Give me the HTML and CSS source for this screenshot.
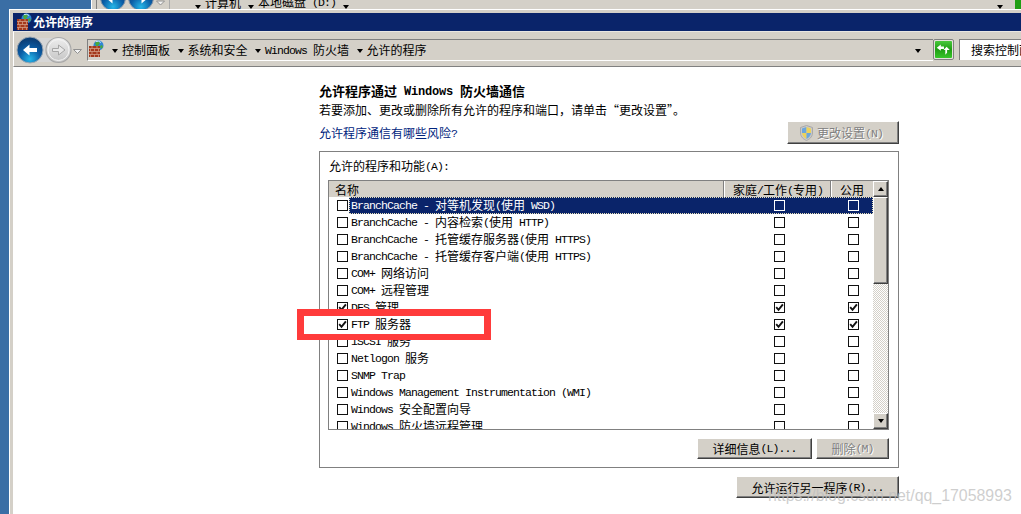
FILE: index.html
```html
<!DOCTYPE html>
<html lang="zh-CN">
<head>
<meta charset="utf-8">
<title>允许的程序</title>
<link rel="stylesheet" href="styles.css">
</head>
<body>
<svg class="defs" width="0" height="0" aria-hidden="true">
  <defs>
    <radialGradient id="gBlue" cx="50%" cy="85%" r="75%"><stop offset="0" stop-color="#25b6e8"/><stop offset=".55" stop-color="#0a5da6"/><stop offset="1" stop-color="#0b3f78"/></radialGradient>
    <linearGradient id="gGrey" x1="0" y1="0" x2="0" y2="1"><stop offset="0" stop-color="#eeeeee"/><stop offset="1" stop-color="#c4c4c4"/></linearGradient>
    <linearGradient id="gGreen" x1="0" y1="0" x2="0" y2="1"><stop offset="0" stop-color="#48c83c"/><stop offset=".5" stop-color="#1f9e14"/><stop offset="1" stop-color="#37c62a"/></linearGradient>
    <symbol id="firewall" viewBox="0 0 17 17">
      <circle cx="10.5" cy="5.5" r="5" fill="#2f86d6"/>
      <path d="M7 3 l3-2 2 2-2 3-2 0z M12 6l2-1 1 2-2 2z" fill="#4aa83c"/>
      <path d="M8 1.5 a5 5 0 0 1 5 1" stroke="#bfe4ff" fill="none"/>
      <rect x="1" y="6" width="11" height="11" fill="#a4391c"/>
      <path d="M1 8.5h11M1 11.5h11M1 14.5h11M4 6v2.5M9 6v2.5M2.500 8.5v3M6.500 8.500v3M10.500 8.500v3M4 11.500v3M9 11.500v3M2.500 14.500v2.500M6.500 14.500v2.500M10.500 14.500v2.500" stroke="#d8a890" stroke-width=".7" fill="none"/>
    </symbol>
    <symbol id="tick" viewBox="0 0 9 9">
      <path d="M1.200 4.200 L3.500 6.800 L7.900 1.300" fill="none" stroke="#111" stroke-width="1.900"/>
    </symbol>
  </defs>
</svg>

<div class="back-window">
  <svg class="back-nav" width="72" height="26" viewBox="0 0 72 26" aria-hidden="true">
    <circle cx="13" cy="13" r="12.500" fill="url(#gBlue)" stroke="#8a97a8"/>
    <path d="M6 13l6.500-5.500v3.500h7.500v4h-7.500v3.500z" fill="#fff"/>
    <circle cx="41" cy="13" r="12.500" fill="url(#gBlue)" stroke="#8a97a8"/>
    <path d="M48 13l-6.500-5.500v3.500h-7.500v4h7.500v3.500z" fill="#fff"/>
    <path d="M56.500 16h8l-4 4z" fill="#f2f2f2" stroke="#909090"/>
  </svg>
  <span class="back-sep"></span>
  <span class="caret back-caret"></span><span class="back-crumb">计算机</span>
  <span class="caret back-caret"></span><span class="back-crumb">本地磁盘<span class="m"> (D:)</span></span>
  <span class="caret back-caret"></span>
  <span class="back-spring"></span>
  <span class="caret back-caret"></span>
  <span class="back-refresh"></span>
</div>

<div class="window">
  <div class="titlebar">
    <svg class="title-icon" width="17" height="17" aria-hidden="true"><use href="#firewall"/></svg>
    <span>允许的程序</span>
  </div>

  <div class="navbar">
    <svg class="nav-buttons" width="73" height="34" viewBox="0 0 73 34" aria-hidden="true">
      <path d="M16 6 H44 V30 H16 Z" fill="#d6d6d6"/>
      <circle cx="44.500" cy="18" r="12.500" fill="url(#gGrey)" stroke="#a8a8a8" stroke-width="1.200"/>
      <circle cx="44.500" cy="18" r="10.500" fill="none" stroke="#f4f4f4"/>
      <path d="M38.500 16.500h6v-3.500l6.500 5-6.500 5v-3.500h-6z" fill="#e8e8e8" stroke="#a6a6a6"/>
      <circle cx="16" cy="18" r="13" fill="url(#gBlue)" stroke="#9aa6b2"/>
      <path d="M9 18l6.500-5.500v3.500h7.500v4h-7.500v3.500z" fill="#fff"/>
      <path d="M59.500 17.500h8l-4 4z" fill="#f2f2f2" stroke="#909090"/>
    </svg>
    <div class="address">
      <svg class="addr-icon" width="17" height="17" aria-hidden="true"><use href="#firewall"/></svg>
      <span class="caret crumb-caret"></span><span class="crumb">控制面板</span>
      <span class="caret crumb-caret"></span><span class="crumb">系统和安全</span>
      <span class="caret crumb-caret"></span><span class="crumb"><span class="m">Windows </span>防火墙</span>
      <span class="caret crumb-caret"></span><span class="crumb">允许的程序</span>
      <span class="caret addr-drop"></span>
    </div>
    <div class="refresh">
      <svg width="17" height="17" viewBox="0 0 19 19" aria-hidden="true">
        <rect width="19" height="19" rx="1" fill="url(#gGreen)"/>
        <path d="M2 7.500l4.500-3.500v2.200h3.500v2.800h-3.500v2z" fill="#fff"/>
        <path d="M16.500 10l-3.500-3.500-3.500 3.500h2v5.500l2-2.500v-3z" fill="#fff"/>
      </svg>
    </div>
    <div class="search">搜索控制面板</div>
  </div>

  <main class="content">
    <h1 class="heading">允许程序通过<span class="m"> Windows </span>防火墙通信</h1>
    <p class="desc">若要添加、更改或删除所有允许的程序和端口，请单击“更改设置”。</p>
    <div class="link-row">
      <a class="link" href="#">允许程序通信有哪些风险<span class="m">?</span></a>
      <button class="btn btn-settings" disabled>
        <svg class="shield" width="13" height="16" viewBox="0 0 13 16" aria-hidden="true">
          <path d="M6.500 .5 L12.500 2.500 V8 C12.500 12 9 14.500 6.500 15.500 C4 14.500 .5 12 .5 8 V2.500 Z" fill="#c9c9c9" stroke="#a9a9a9"/>
          <path d="M6.500 2 L2 3.500 V8 H6.500 Z" fill="#6aa6dc"/>
          <path d="M6.500 2 L11 3.500 V8 H6.500 Z" fill="#ecd25a"/>
          <path d="M2 8 H6.500 V14 C4.500 13 2.300 11 2 8 Z" fill="#ecd25a"/>
          <path d="M11 8 H6.500 V14 C8.500 13 10.700 11 11 8 Z" fill="#6aa6dc"/>
        </svg>
        <span>更改设置<span class="m">(N)</span></span>
      </button>
    </div>

    <section class="group">
      <div class="group-label">允许的程序和功能<span class="m">(A):</span></div>
      <div class="list">
        <div class="list-main">
          <div class="list-head">
            <div class="col-name">名称</div>
            <div class="col-a">家庭<span class="m">/</span>工作<span class="m">(</span>专用<span class="m">)</span></div>
            <div class="col-b">公用</div>
          </div>

          <div class="row selected">
            <span class="cb"></span>
            <div class="row-body">
              <div class="name"><span class="m">BranchCache - </span>对等机发现<span class="m">(</span>使用<span class="m"> WSD)</span></div>
              <div class="cell-a"><span class="cb"></span></div>
              <div class="cell-b"><span class="cb"></span></div>
            </div>
          </div>
          <div class="row">
            <span class="cb"></span>
            <div class="row-body">
              <div class="name"><span class="m">BranchCache - </span>内容检索<span class="m">(</span>使用<span class="m"> HTTP)</span></div>
              <div class="cell-a"><span class="cb"></span></div>
              <div class="cell-b"><span class="cb"></span></div>
            </div>
          </div>
          <div class="row">
            <span class="cb"></span>
            <div class="row-body">
              <div class="name"><span class="m">BranchCache - </span>托管缓存服务器<span class="m">(</span>使用<span class="m"> HTTPS)</span></div>
              <div class="cell-a"><span class="cb"></span></div>
              <div class="cell-b"><span class="cb"></span></div>
            </div>
          </div>
          <div class="row">
            <span class="cb"></span>
            <div class="row-body">
              <div class="name"><span class="m">BranchCache - </span>托管缓存客户端<span class="m">(</span>使用<span class="m"> HTTPS)</span></div>
              <div class="cell-a"><span class="cb"></span></div>
              <div class="cell-b"><span class="cb"></span></div>
            </div>
          </div>
          <div class="row">
            <span class="cb"></span>
            <div class="row-body">
              <div class="name"><span class="m">COM+ </span>网络访问</div>
              <div class="cell-a"><span class="cb"></span></div>
              <div class="cell-b"><span class="cb"></span></div>
            </div>
          </div>
          <div class="row">
            <span class="cb"></span>
            <div class="row-body">
              <div class="name"><span class="m">COM+ </span>远程管理</div>
              <div class="cell-a"><span class="cb"></span></div>
              <div class="cell-b"><span class="cb"></span></div>
            </div>
          </div>
          <div class="row">
            <span class="cb"><svg class="tick"><use href="#tick"/></svg></span>
            <div class="row-body">
              <div class="name"><span class="m">DFS </span>管理</div>
              <div class="cell-a"><span class="cb"><svg class="tick"><use href="#tick"/></svg></span></div>
              <div class="cell-b"><span class="cb"><svg class="tick"><use href="#tick"/></svg></span></div>
            </div>
          </div>
          <div class="row row-marked">
            <span class="cb"><svg class="tick"><use href="#tick"/></svg></span>
            <div class="row-body">
              <div class="name"><span class="m">FTP </span>服务器</div>
              <div class="cell-a"><span class="cb"><svg class="tick"><use href="#tick"/></svg></span></div>
              <div class="cell-b"><span class="cb"><svg class="tick"><use href="#tick"/></svg></span></div>
            </div>
          </div>
          <div class="row">
            <span class="cb"></span>
            <div class="row-body">
              <div class="name"><span class="m">iSCSI </span>服务</div>
              <div class="cell-a"><span class="cb"></span></div>
              <div class="cell-b"><span class="cb"></span></div>
            </div>
          </div>
          <div class="row">
            <span class="cb"></span>
            <div class="row-body">
              <div class="name"><span class="m">Netlogon </span>服务</div>
              <div class="cell-a"><span class="cb"></span></div>
              <div class="cell-b"><span class="cb"></span></div>
            </div>
          </div>
          <div class="row">
            <span class="cb"></span>
            <div class="row-body">
              <div class="name"><span class="m">SNMP Trap</span></div>
              <div class="cell-a"><span class="cb"></span></div>
              <div class="cell-b"><span class="cb"></span></div>
            </div>
          </div>
          <div class="row">
            <span class="cb"></span>
            <div class="row-body">
              <div class="name"><span class="m">Windows Management Instrumentation (WMI)</span></div>
              <div class="cell-a"><span class="cb"></span></div>
              <div class="cell-b"><span class="cb"></span></div>
            </div>
          </div>
          <div class="row">
            <span class="cb"></span>
            <div class="row-body">
              <div class="name"><span class="m">Windows </span>安全配置向导</div>
              <div class="cell-a"><span class="cb"></span></div>
              <div class="cell-b"><span class="cb"></span></div>
            </div>
          </div>
          <div class="row">
            <span class="cb"></span>
            <div class="row-body">
              <div class="name"><span class="m">Windows </span>防火墙远程管理</div>
              <div class="cell-a"><span class="cb"></span></div>
              <div class="cell-b"><span class="cb"></span></div>
            </div>
          </div>
        </div>

        <div class="scrollbar">
          <div class="sb-btn"><span class="caret caret-up"></span></div>
          <div class="sb-thumb"></div>
          <div class="sb-track"></div>
          <div class="sb-btn"><span class="caret"></span></div>
        </div>
      </div>

      <div class="group-actions">
        <button class="btn btn-details">详细信息<span class="m">(L)...</span></button>
        <button class="btn btn-delete" disabled>删除<span class="m">(M)</span></button>
      </div>
    </section>

    <div class="bottom-actions">
      <button class="btn btn-allow">允许运行另一程序<span class="m">(R)...</span></button>
    </div>
  </main>
</div>

<div class="red-mark"></div>
<div class="watermark">https://blog.csdn.net/qq_17058993</div>
</body>
</html>
```

FILE: styles.css
```css
* { box-sizing: border-box; }

html, body {
  margin: 0;
  height: 100%;
}

body {
  position: relative;
  width: 1021px;
  height: 514px;
  overflow: hidden;
  background: #3a6ea5;
  color: #000;
  font: 12px/17px "Noto Sans CJK SC", "Liberation Sans", sans-serif;
}

.defs { position: absolute; }

.m {
  font-family: "Liberation Mono", "Noto Sans CJK SC", monospace;
  font-size: 11.5px;
  letter-spacing: -0.9px;
  white-space: pre;
  vertical-align: 1px;
}

.caret {
  display: inline-block;
  flex: none;
  width: 0;
  height: 0;
  border-style: solid;
  border-width: 4px 3.5px 0;
  border-color: #000 transparent transparent;
}

.caret-up {
  border-width: 0 3.5px 4px;
  border-color: transparent transparent #000;
}

/* window behind, only its lower edge peeks out */
.back-window {
  position: absolute;
  left: 91px;
  top: -20px;
  right: 0;
  height: 35px;
  display: flex;
  align-items: center;
  padding-left: 4px;
  background: #d4d0c8;
  border-left: 1px solid #fff;
  box-shadow: inset 4px 0 0 #d4d0c8, inset 5px 0 0 #808080;
}

.back-nav { flex: none; margin-left: 4px; }
.back-sep {
  width: 1px;
  height: 24px;
  margin: 0 25px 0 -3px;
  background: #aaa;
}
.back-caret { margin-top: 18px; }
.back-crumb { margin: 9px 7px 0 4px; white-space: nowrap; }
.back-spring { flex: 1; }
.back-refresh {
  width: 6px;
  height: 20px;
  margin-left: 12px;
  margin-top: 14px;
  background: #1f9e14;
}

/* main window */
.window {
  position: absolute;
  left: 9px;
  top: 9px;
  right: 0;
  bottom: 0;
  display: flex;
  flex-direction: column;
  padding: 4px 0 0 4px;
  background: #d4d0c8;
  box-shadow: inset 1px 1px 0 #fff;
}

.titlebar {
  flex: none;
  display: flex;
  align-items: center;
  height: 18px;
  padding: 0 0 1px 3px;
  background: #0a246a;
  color: #fff;
  font-weight: 700;
}

.title-icon { margin-top: -1px; }

.navbar {
  flex: none;
  display: flex;
  align-items: flex-start;
  height: 36px;
  padding-top: 7px;
  border-top: 1px solid #e8e6e2;
  border-left: 1px solid #fff;
  border-bottom: 1px solid #808080;
  background: #d4d0c8;
}

.nav-buttons {
  flex: none;
  margin-top: -7px;
}

.address {
  flex: 1;
  display: flex;
  align-items: center;
  height: 22px;
  border-top: 1px solid #808080;
  border-left: 1px solid #808080;
  border-bottom: 1px solid #fff;
  white-space: nowrap;
}

.addr-icon { flex: none; margin: -3px 0 0 0; }
.crumb-caret { margin: 2px 4px 0 7px; }
.crumb-caret:first-of-type { margin-left: 7px; }
.crumb { white-space: nowrap; margin-right: 0.5px; padding-bottom: 1px; }
.addr-drop { margin: 2px 12px 0 auto; }

.refresh {
  flex: none;
  width: 21px;
  height: 21px;
  padding: 1px;
  background: #e4e2dc;
  border: 1px solid #808080;
  border-radius: 2px;
  line-height: 0;
}

.search {
  flex: none;
  width: 62px;
  height: 21px;
  margin-left: 5px;
  padding-left: 11px;
  overflow: hidden;
  white-space: nowrap;
  background: #fff;
  border-top: 1px solid #808080;
  border-left: 1px solid #808080;
  line-height: 20px;
}

/* page */
.content {
  flex: 1;
  min-height: 0;
  overflow: hidden;
  padding: 15px 0 0 306px;
  background: #fff;
}

.heading {
  margin: 0;
  height: 18px;
  font-size: 13px;
  line-height: 18px;
  font-weight: 700;
  white-space: nowrap;
}

.heading .m {
  font-size: 12px;
  letter-spacing: -0.2px;
  font-weight: 700;
}

.desc {
  margin: 1px 0 2px;
  height: 18px;
  line-height: 18px;
  white-space: nowrap;
}

.link-row {
  width: 580px;
  height: 23px;
  margin-bottom: 7px;
  display: flex;
  align-items: center;
  justify-content: space-between;
}

.link { color: #00247d; text-decoration: none; }

.btn {
  display: flex;
  align-items: center;
  justify-content: center;
  padding: 0;
  font: inherit;
  color: #000;
  background: #d4d0c8;
  border: 1px solid;
  border-color: #fff #404040 #404040 #fff;
  box-shadow: inset -1px -1px 0 #808080;
  white-space: nowrap;
}

.btn:disabled {
  color: #808080;
  text-shadow: 1px 1px 0 #fff;
}

.btn-settings { width: 112px; height: 23px; gap: 4px; padding-right: 3px; }

.group {
  width: 580px;
  height: 317px;
  padding: 0 9px 0 8px;
  border: 1px solid #808080;
}

.group-label {
  height: 28px;
  padding: 5px 0 0 1px;
  line-height: 18px;
}

.list {
  display: flex;
  width: 561px;
  height: 250px;
  border: 1px solid #808080;
  background: #fff;
}

.list-main {
  width: 544px;
  overflow: hidden;
}

.list-head {
  display: flex;
  height: 16px;
  background: #d4d0c8;
  line-height: 17px;
  overflow: hidden;
}

.col-name { flex: 1; padding-left: 6px; border-right: 1px solid #808080; }
.col-a {
  width: 107px;
  padding-left: 8px;
  border-left: 1px solid #fff;
  border-right: 1px solid #808080;
  white-space: nowrap;
}
.col-b { width: 42px; padding-left: 8px; border-left: 1px solid #fff; }

.row {
  display: flex;
  align-items: center;
  height: 17px;
  padding-left: 8px;
  white-space: nowrap;
}

.row-marked { position: relative; z-index: 2; }

.cb {
  flex: none;
  display: block;
  width: 11px;
  height: 11px;
  background: #fff;
  border: 1px solid #111;
  line-height: 0;
}

.tick { display: block; width: 9px; height: 9px; }

.row-body {
  flex: 1;
  display: flex;
  align-items: center;
  height: 17px;
  margin-left: 1px;
}

.name { flex: 1; padding: 0 0 2px 2px; }
.cell-a { width: 107px; padding-left: 50px; }
.cell-b { width: 42px; padding-left: 17px; }

.selected .row-body {
  background: #0a246a;
  color: #fff;
  outline: 1px dotted #e8e0b8;
  outline-offset: -1px;
}

.selected .row-body .cb { background: transparent; border-color: #fff; }

.scrollbar {
  flex: none;
  width: 15px;
  display: flex;
  flex-direction: column;
}

.sb-btn {
  flex: none;
  height: 16px;
  display: flex;
  align-items: center;
  justify-content: center;
  background: #d4d0c8;
  border: 1px solid;
  border-color: #fff #404040 #404040 #fff;
  box-shadow: inset -1px -1px 0 #808080;
}

.sb-thumb {
  flex: none;
  height: 87px;
  background: #d4d0c8;
  border: 1px solid;
  border-color: #fff #404040 #404040 #fff;
  box-shadow: inset -1px -1px 0 #808080;
}

.sb-track {
  flex: 1;
  background: repeating-conic-gradient(#d4d0c8 0 25%, #fff 0 50%) 0 0 / 2px 2px;
}

.group-actions {
  display: flex;
  justify-content: flex-end;
  gap: 4px;
  margin-top: 8px;
}

.btn-details { width: 115px; height: 21px; }
.btn-delete { width: 73px; height: 21px; }

.bottom-actions {
  width: 580px;
  display: flex;
  justify-content: flex-end;
  margin-top: 8px;
}

.btn-allow { width: 163px; height: 22px; }

/* annotation and watermark lying over the screenshot */
.red-mark {
  position: absolute;
  left: 297px;
  top: 309px;
  width: 194px;
  height: 31px;
  z-index: 1;
  background: #fff;
  border: 7px solid #ff3b3b;
  border-bottom-width: 6px;
}

.watermark {
  position: absolute;
  left: 768px;
  top: 485px;
  z-index: 3;
  font: 15.9px/22px "Liberation Sans", sans-serif;
  color: rgba(190, 190, 190, 0.75);
  white-space: nowrap;
}
```
